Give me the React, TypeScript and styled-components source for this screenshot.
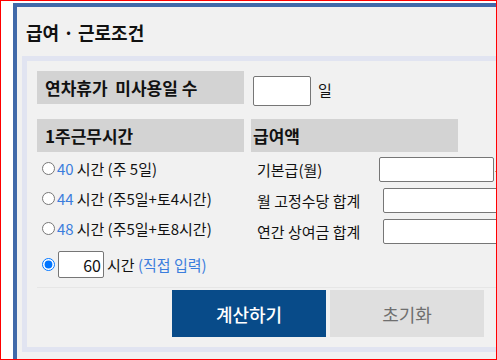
import styled, { createGlobalStyle } from "styled-components"

const GlobalStyle = createGlobalStyle`
  html, body {
    margin: 0;
    padding: 0;
    background: #fff;
  }
  body {
    font-family: "Noto Sans CJK KR", "Noto Sans", sans-serif;
    color: #111;
  }
  * {
    box-sizing: border-box;
  }
`

const Page = styled.div`
  position: relative;
  width: 497px;
  height: 360px;
  padding: 3px 0 0 13px;
  overflow: hidden;
  background: #fff;
  &::after {
    content: "";
    position: absolute;
    inset: 0;
    border: 1px solid #ff0000;
    pointer-events: none;
  }
`

const Window = styled.div`
  width: 520px;
  height: 100%;
  background: #f1f1f1;
  border-top: 4px solid #4169a9;
  border-left: 4px solid #4169a9;
`

const Title = styled.h1`
  margin: 0;
  height: 49px;
  padding-left: 9px;
  display: flex;
  align-items: center;
  font-size: 18px;
  font-weight: bold;
  line-height: 1;
`

const Panel = styled.div`
  margin-left: 5px;
  width: 500px;
  border: 5px solid #e1e4f1;
  padding: 10px;
`

const Row = styled.div`
  display: flex;
  align-items: flex-start;
`

const Label = styled.div<{ pad?: number }>`
  width: 207px;
  height: 33px;
  padding-left: ${({ pad = 8 }) => `${pad}px`};
  display: flex;
  align-items: center;
  background: #d3d3d3;
  font-size: 17px;
  font-weight: bold;
  line-height: 1;
  white-space: pre;
`

const Field = styled.input<{ w: number; h: number; gap?: number; top?: number; right?: boolean }>`
  width: ${({ w }) => `${w}px`};
  height: ${({ h }) => `${h}px`};
  margin: ${({ top = 0, gap = 0 }) => `${top}px 0 0 ${gap}px`};
  padding: 0 2px;
  border: 1px solid #767676;
  border-radius: 2px;
  background: #fff;
  font-family: inherit;
  font-size: 16px;
  text-align: ${({ right }) => (right ? "right" : "left")};
  color: #111;
  outline: none;
`

const Unit = styled.span<{ gap?: number; top?: number; size?: number }>`
  margin: ${({ top = 0, gap = 5 }) => `${top}px 0 0 ${gap}px`};
  font-size: ${({ size = 15 }) => `${size}px`};
  line-height: 1;
  white-space: pre;
`

const Columns = styled.div`
  margin-top: 13px;
  display: grid;
  grid-template-columns: 207px auto;
  column-gap: 7px;
`

const Column = styled.div`
  display: flex;
  flex-direction: column;
`

const OptionRow = styled.label<{ h?: number; top?: number }>`
  height: ${({ h = 30 }) => `${h}px`};
  margin-top: ${({ top = 0 }) => `${top}px`};
  display: flex;
  align-items: center;
  font-size: 15px;
  line-height: 1;
  white-space: nowrap;
  input[type="radio"] {
    margin: 0 2px 0 5px;
    width: 13px;
    height: 13px;
  }
`

const Blue = styled.span<{ gap?: number }>`
  color: #3b7ddd;
  margin-right: ${({ gap = 0 }) => `${gap}px`};
`

const PayRow = styled.div<{ top?: number }>`
  height: 31px;
  margin-top: ${({ top = 0 }) => `${top}px`};
  display: flex;
  align-items: center;
  padding-left: 6px;
  white-space: nowrap;
`

const PayLabel = styled.span`
  width: 122px;
  font-size: 15px;
  line-height: 1;
`

const Tail = styled.span`
  margin-left: 1px;
  font-size: 12px;
  line-height: 1;
`

const Actions = styled.div`
  margin-top: 9px;
  padding: 2px 0 0 135px;
  border-top: 1px solid #e6e6e6;
  display: flex;
  gap: 4px;
`

const Button = styled.button<{ primary?: boolean }>`
  width: 154px;
  height: 47px;
  border: none;
  border-radius: 0;
  background: ${({ primary }) => (primary ? "#084b89" : "#dfdfdf")};
  color: ${({ primary }) => (primary ? "#fff" : "#6f6f6f")};
  font-family: inherit;
  font-size: 18px;
  font-weight: ${({ primary }) => (primary ? 500 : 400)};
  cursor: pointer;
`

const hours = [
  { value: "40", note: "시간 (주 5일)" },
  { value: "44", note: "시간 (주5일+토4시간)" },
  { value: "48", note: "시간 (주5일+토8시간)" },
]

const pay = [
  { label: "기본급(월)", w: 115, gap: 0, tail: true },
  { label: "월 고정수당 합계", w: 120, gap: 4, tail: false },
  { label: "연간 상여금 합계", w: 120, gap: 4, tail: false },
]

export default function App() {
  return (
    <>
      <GlobalStyle />
      <Page>
        <Window>
          <Title>급여 · 근로조건</Title>
          <Panel>
            <Row>
              <Label>{"연차휴가  미사용일 수"}</Label>
              <Field w={58} h={30} gap={9} top={5} />
              <Unit gap={7} top={11}>일</Unit>
            </Row>
            <Columns>
              <Column>
                <Label>1주근무시간</Label>
                {hours.map((h, i) => (
                  <OptionRow key={h.value} top={i === 0 ? 1 : 0}>
                    <input type="radio" name="hours" />
                    <Blue gap={3}>{h.value}</Blue>
                    {h.note}
                  </OptionRow>
                ))}
                <OptionRow h={27} top={8}>
                  <input type="radio" name="hours" defaultChecked />
                  <Field w={46} h={27} gap={1} right defaultValue="60" />
                  <Unit gap={3} size={15}>
                    시간 <Blue>(직접 입력)</Blue>
                  </Unit>
                </OptionRow>
              </Column>
              <Column>
                <Label pad={2}>급여액</Label>
                {pay.map((p, i) => (
                  <PayRow key={p.label} top={i === 0 ? 2 : 0}>
                    <PayLabel>{p.label}</PayLabel>
                    <Field w={p.w} h={25} gap={p.gap} />
                    {p.tail && <Tail>-</Tail>}
                  </PayRow>
                ))}
              </Column>
            </Columns>
            <Actions>
              <Button primary>계산하기</Button>
              <Button>초기화</Button>
            </Actions>
          </Panel>
        </Window>
      </Page>
    </>
  )
}
